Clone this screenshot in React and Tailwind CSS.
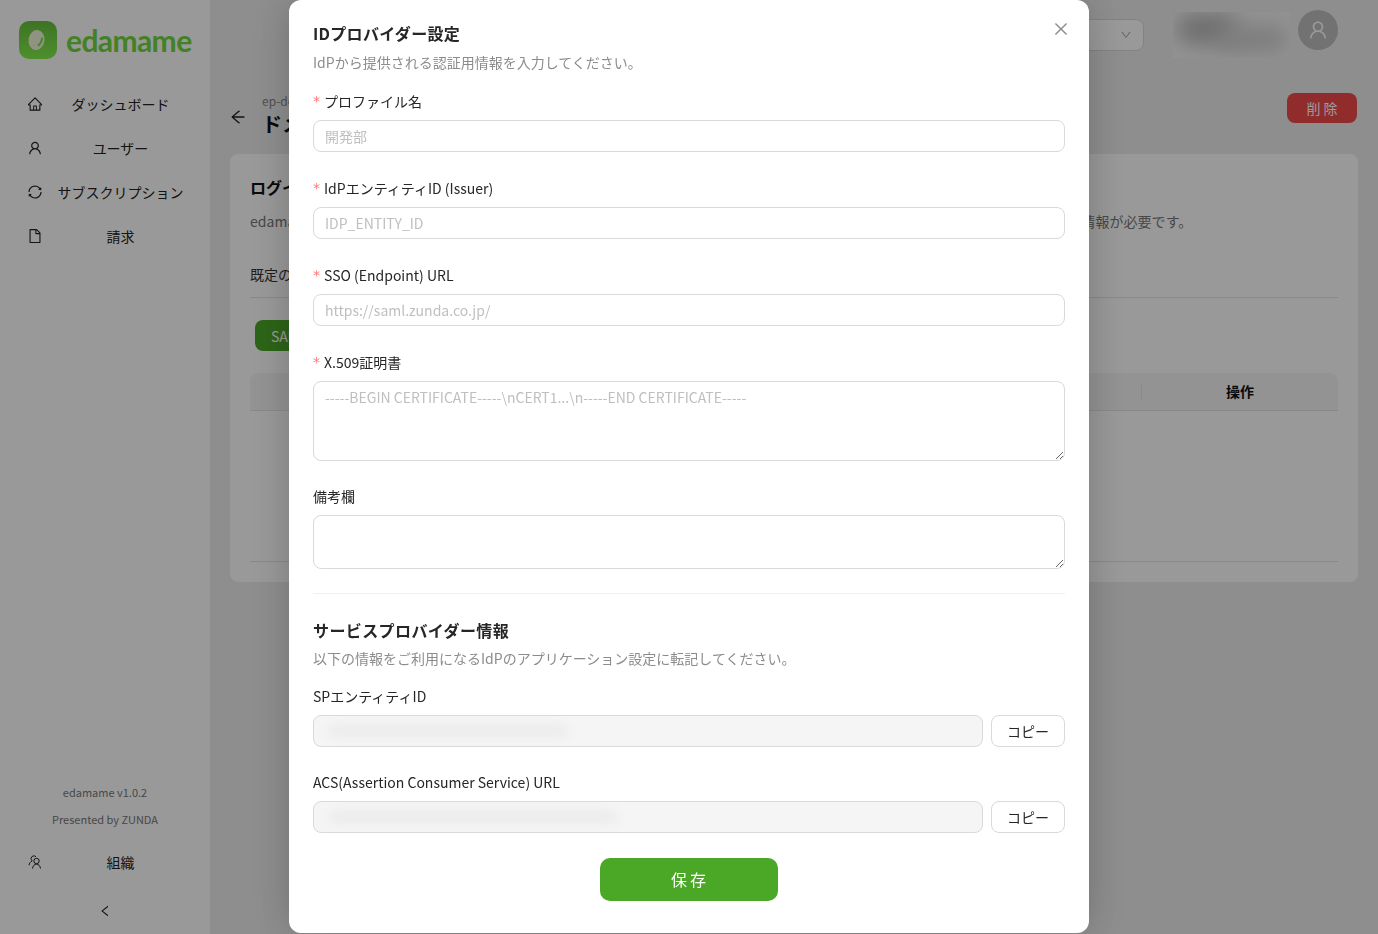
import React from "react";
import {
  AiOutlineHome,
  AiOutlineUser,
  AiOutlineSync,
  AiOutlineFile,
  AiOutlineClose,
  AiOutlineArrowLeft,
  AiOutlineLeft,
  AiOutlineDown,
} from "react-icons/ai";

const font = "[font-family:'Noto_Sans_CJK_JP','Noto_Sans',sans-serif]";

const navItems = [
  { label: "ダッシュボード", Icon: AiOutlineHome },
  { label: "ユーザー", Icon: AiOutlineUser },
  { label: "サブスクリプション", Icon: AiOutlineSync },
  { label: "請求", Icon: AiOutlineFile },
];

const OrgIcon = () => (
  <svg width="14" height="14" viewBox="0 0 14 14" fill="none" stroke="currentColor" strokeWidth="1">
    <circle cx="8.500" cy="6" r="2.700" />
    <path d="M4.500 13.500c.3-2.500 1.900-4.400 4-4.400s3.700 1.900 4 4.400" />
    <path d="M8 1.800A2.800 2.800 0 0 0 3.100 3.500c0 1 .4 1.800 1.100 2.400C2.500 6.700 1.300 8.300 1 10.300" />
  </svg>
);

const Logo = () => (
  <div className="flex items-center gap-[9px]">
    <svg width="38" height="38" viewBox="0 0 38 38">
      <defs>
        <linearGradient id="logoBg" x1="0" y1="0" x2="0" y2="1">
          <stop offset="0" stopColor="#66c03e" />
          <stop offset="1" stopColor="#82f04a" />
        </linearGradient>
      </defs>
      <rect width="38" height="38" rx="10" fill="url(#logoBg)" />
      <ellipse cx="17.500" cy="19" rx="8" ry="10" fill="#f0f6d8" transform="rotate(8 17.500 19)" />
      <path d="M23 17.500c-.2 2.800-1.400 5-3.500 6.800" stroke="#7fdc4a" strokeWidth="2" fill="none" strokeLinecap="round" />
    </svg>
    <span className="text-[30px] leading-none font-bold tracking-[-0.6px] text-[#70d83c] [font-family:'Lato',sans-serif]">
      edamame
    </span>
  </div>
);

const Sidebar = () => (
  <aside className="flex h-full w-[210px] shrink-0 flex-col bg-white pb-[16px] pt-[21px]">
    <div className="pl-[19px]">
      <Logo />
    </div>
    <nav className="mt-[23px] flex flex-col">
      {navItems.map(({ label, Icon }) => (
        <div key={label} className="flex h-[44px] items-center pl-[27px] pr-[12px] text-sm text-[#222]">
          <Icon className="shrink-0 text-[16px]" />
          <span className="flex-1 text-center">{label}</span>
        </div>
      ))}
    </nav>
    <div className="mt-auto flex flex-col items-center gap-[9px] text-[11px] leading-[18px] text-[#777]">
      <span>edamame v1.0.2</span>
      <span>Presented by ZUNDA</span>
    </div>
    <div className="mt-[12px] flex h-[44px] items-center pl-[28px] pr-[12px] text-sm text-[#222]">
      <span className="w-[15px] shrink-0"><OrgIcon /></span>
      <span className="flex-1 text-center">組織</span>
    </div>
    <div className="mt-[20px] flex justify-center text-[#222]">
      <AiOutlineLeft className="text-[14px]" />
    </div>
  </aside>
);

const Main = () => (
  <main className="flex min-w-0 flex-1 flex-col bg-[#ededed] px-[20px]">
    <header className="flex h-[70px] items-center justify-end">
      <div className="flex h-[32px] w-[200px] items-center justify-end rounded-[8px] border border-[#d9d9d9] bg-white pr-[11px]">
        <AiOutlineDown className="text-[12px] text-[#aaa]" />
      </div>
      <div className="relative ml-[29px] h-[46px] w-[117px] overflow-hidden bg-[#f4f4f4]">
        <div className="absolute left-[4px] top-[2px] h-[30px] w-[60px] rounded-full bg-[#b8b8b8] blur-[10px]" />
        <div className="absolute left-[44px] top-[14px] h-[26px] w-[70px] rounded-full bg-[#d0d0d0] blur-[10px]" />
      </div>
      <div className="ml-[8px] mr-[20px] mb-[10px] flex h-[40px] w-[40px] items-center justify-center rounded-full bg-[#bfbfbf] text-white">
        <AiOutlineUser className="text-[22px]" />
      </div>
    </header>
    <div className="mt-[21px] flex items-center justify-between">
      <div className="flex items-center">
        <AiOutlineArrowLeft className="-ml-[1px] mt-[6px] text-[18px] text-[#222]" />
        <div className="ml-[15px]">
          <div className="text-xs leading-[20px] text-[#888]">ep-demo</div>
          <div className="text-xl font-bold leading-[26px] text-[#111]">ドメイン設定</div>
        </div>
      </div>
      <button className="mb-[12px] mr-[1px] h-[30px] w-[70px] rounded-[8px] bg-[#f04a4a] pl-[3px] text-sm tracking-[3px] text-white">削除</button>
    </div>
    <section className="mt-[17px] flex h-[428px] flex-col rounded-[8px] bg-white px-[20px] pt-[21px]">
      <h2 className="text-base font-bold leading-[24px] text-[#111]">ログイン設定</h2>
      <p className="mt-[11px] text-sm leading-[22px] tracking-[0.06px] text-[#777]">
        edamameへのログイン方法を各ドメイン単位で設定します。SAML認証を利用するには、事前にIDプロバイダーから提供される認証情報が必要です。
      </p>
      <div className="mt-[31px] border-b border-[#e5e5e5] pb-[12px] text-sm leading-[22px] text-[#333]">既定のログイン方法</div>
      <div className="mt-[22px] pl-[5px]">
        <button className="h-[31px] rounded-[8px] bg-[#4ba827] px-[16px] text-sm text-white">SAML追加</button>
      </div>
      <div className="mt-[22px] flex h-[38px] items-center rounded-t-[8px] border-b border-[#e5e5e5] bg-[#f5f5f5]">
        <div className="flex-1" />
        <div className="h-[18px] w-px bg-[#e5e5e5]" />
        <div className="w-[196px] pb-[2px] text-center text-sm font-bold text-[#111]">操作</div>
      </div>
      <div className="mt-[150px] border-b border-[#e5e5e5]" />
    </section>
  </main>
);

const Field = ({ label, required, className, children }) => (
  <div className={className}>
    <label className="mb-[8px] flex text-sm leading-[22px] text-[#262626]">
      {required && <span className="mr-[4px] text-[#ff7875] [font-family:'DejaVu_Sans',sans-serif]">*</span>}
      <span>{label}</span>
    </label>
    {children}
  </div>
);

const inputClass =
  "block h-[32px] w-full rounded-[8px] border border-[#d9d9d9] bg-white px-[11px] text-sm outline-none placeholder:text-[#bfbfbf]";
const textareaClass =
  "block w-full rounded-[8px] border border-[#d9d9d9] bg-white px-[11px] py-[4px] text-sm leading-[22px] outline-none placeholder:text-[#bfbfbf]";

const ReadonlyRow = ({ blurWidth }) => (
  <div className="flex gap-[8px]">
    <div className="relative h-[32px] flex-1 overflow-hidden rounded-[8px] border border-[#d9d9d9] bg-[#f5f5f5]">
      <div className={`absolute left-[14px] top-[8px] h-[14px] rounded-full bg-[#ececec] blur-[5px] ${blurWidth}`} />
    </div>
    <button className="h-[32px] w-[74px] rounded-[8px] border border-[#d9d9d9] bg-white text-sm text-[#262626]">コピー</button>
  </div>
);

const Modal = () => (
  <div className="fixed inset-0 bg-black/40">
    <div className="absolute left-[289px] top-0 h-[933px] w-[800px] rounded-[12px] bg-white px-[24px] pt-[21px] shadow-[0_0_40px_rgba(0,0,0,0.22)]">
      <button className="absolute right-[19px] top-[20px] text-[#8c8c8c]">
        <AiOutlineClose className="text-[18px]" />
      </button>
      <h2 className="text-base font-bold leading-[24px] tracking-[0.3px] text-[#262626]">IDプロバイダー設定</h2>
      <p className="mt-[6px] text-sm leading-[22px] text-[#8c8c8c]">IdPから提供される認証用情報を入力してください。</p>
      <Field label="プロファイル名" required className="mt-[17px]">
        <input className={inputClass} placeholder="開発部" />
      </Field>
      <Field label="IdPエンティティID (Issuer)" required className="mt-[25px]">
        <input className={inputClass} placeholder="IDP_ENTITY_ID" />
      </Field>
      <Field label="SSO (Endpoint) URL" required className="mt-[25px]">
        <input className={inputClass} placeholder="https://saml.zunda.co.jp/" />
      </Field>
      <Field label="X.509証明書" required className="mt-[25px]">
        <textarea
          className={`${textareaClass} h-[80px]`}
          placeholder="-----BEGIN CERTIFICATE-----\nCERT1...\n-----END CERTIFICATE-----"
        />
      </Field>
      <Field label="備考欄" className="mt-[24px]">
        <textarea className={`${textareaClass} h-[54px]`} />
      </Field>
      <div className="mt-[24px] border-t border-[#f0f0f0]" />
      <h3 className="mt-[24px] text-base font-bold leading-[24px] tracking-[0.4px] text-[#262626]">サービスプロバイダー情報</h3>
      <p className="mt-[5px] text-sm leading-[22px] text-[#8c8c8c]">以下の情報をご利用になるIdPのアプリケーション設定に転記してください。</p>
      <Field label="SPエンティティID" className="mt-[16px]">
        <ReadonlyRow blurWidth="w-[240px]" />
      </Field>
      <Field label="ACS(Assertion Consumer Service) URL" className="mt-[24px]">
        <ReadonlyRow blurWidth="w-[290px]" />
      </Field>
      <div className="mt-[25px] flex justify-center">
        <button className="h-[43px] w-[178px] rounded-[10px] bg-[#4ba827] pb-[1px] pl-[2px] text-base tracking-[3px] text-white">保存</button>
      </div>
    </div>
  </div>
);

export default function App() {
  return (
    <div className={`flex h-screen overflow-hidden ${font}`}>
      <Sidebar />
      <Main />
      <Modal />
    </div>
  );
}
